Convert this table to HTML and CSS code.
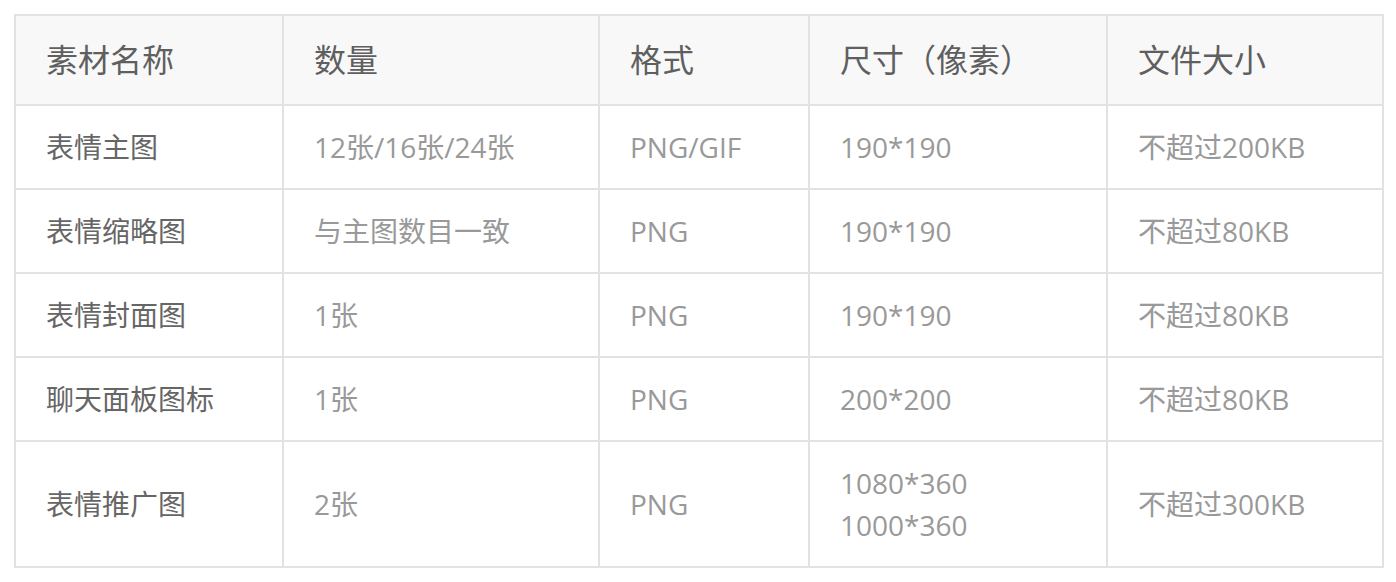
FILE: index.html
```html
<!DOCTYPE html>
<html lang="zh-CN">
<head>
<meta charset="utf-8">
<title>表情素材规格</title>
<link rel="stylesheet" href="styles.css">
</head>
<body>
<div class="page">
  <table class="spec">
    <colgroup>
      <col class="c1"><col class="c2"><col class="c3"><col class="c4"><col class="c5">
    </colgroup>
    <thead>
      <tr><th>素材名称</th><th>数量</th><th>格式</th><th>尺寸（像素）</th><th>文件大小</th></tr>
    </thead>
    <tbody>
      <tr><td class="name">表情主图</td><td>12张/16张/24张</td><td>PNG/GIF</td><td>190*190</td><td>不超过200KB</td></tr>
      <tr><td class="name">表情缩略图</td><td>与主图数目一致</td><td>PNG</td><td>190*190</td><td>不超过80KB</td></tr>
      <tr><td class="name">表情封面图</td><td>1张</td><td>PNG</td><td>190*190</td><td>不超过80KB</td></tr>
      <tr><td class="name">聊天面板图标</td><td>1张</td><td>PNG</td><td>200*200</td><td>不超过80KB</td></tr>
      <tr><td class="name">表情推广图</td><td>2张</td><td>PNG</td><td>1080*360<br>1000*360</td><td>不超过300KB</td></tr>
    </tbody>
  </table>
</div>
</body>
</html>
```
FILE: styles.css
```css
html, body {
  margin: 0;
  padding: 0;
  background: #ffffff;
}
.page {
  padding: 14px;
}
.spec {
  border-collapse: collapse;
  table-layout: fixed;
  width: 1370px;
  font-family: "Open Sans", "Noto Sans CJK SC", sans-serif;
}
.c1 { width: 268px; }
.c2 { width: 316px; }
.c3 { width: 210px; }
.c4 { width: 298px; }
.c5 { width: 276px; }
.spec th,
.spec td {
  border: 2px solid #e1e1e6;
  padding: 20px 30px;
  text-align: left;
  vertical-align: middle;
}
.spec th {
  background: #f8f8f8;
  font-size: 32px;
  line-height: 48px;
  font-weight: normal;
  color: #5f5f5f;
}
.spec td {
  font-size: 28px;
  line-height: 42px;
  color: #999999;
}
.spec td.name {
  color: #666666;
}
```
